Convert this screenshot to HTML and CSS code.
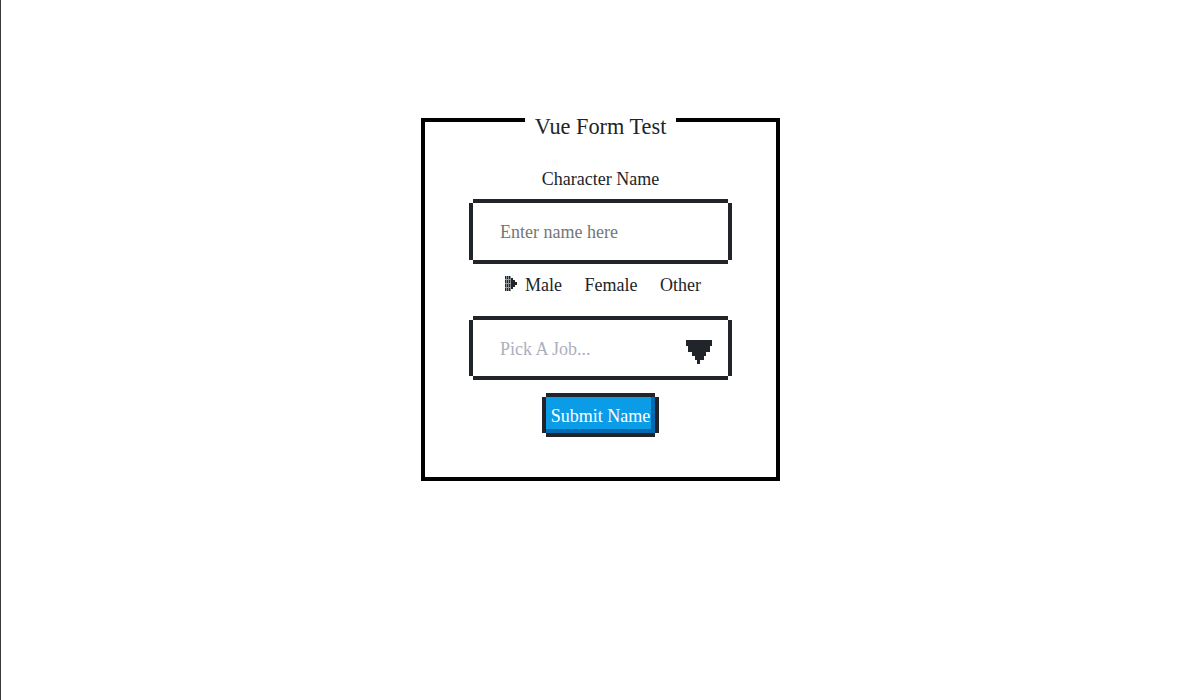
FILE: index.html
```html
<!DOCTYPE html>
<html lang="en">
<head>
<meta charset="utf-8">
<title>Vue Form Test</title>
<link rel="stylesheet" href="styles.css">
</head>
<body>
<div class="page">
  <form class="card">
    <h2 class="card-title">Vue Form Test</h2>
    <label class="field-label" for="name">Character Name</label>
    <div class="pixel-box input-box">
      <input id="name" class="text-input" type="text" placeholder="Enter name here">
    </div>
    <div class="radios">
      <label class="radio">
        <svg class="radio-icon" width="12" height="15" viewBox="0 0 12 15" aria-hidden="true">
          <rect x="0" y="0" width="6" height="15" fill="#212529"/>
          <rect x="1" y="0" width="1" height="15" fill="#8a8d90"/>
          <rect x="3" y="0" width="1" height="15" fill="#8a8d90"/>
          <rect x="5" y="0" width="1" height="15" fill="#8a8d90"/>
          <rect x="0" y="3" width="6" height="1" fill="#9a9da0"/>
          <rect x="0" y="7" width="6" height="1" fill="#9a9da0"/>
          <rect x="0" y="11" width="6" height="1" fill="#9a9da0"/>
          <rect x="6" y="2" width="2" height="11" fill="#212529"/>
          <rect x="8" y="4" width="2" height="7" fill="#212529"/>
          <rect x="10" y="6" width="2" height="3" fill="#212529"/>
        </svg>
        <span>Male</span>
      </label>
      <label class="radio"><span>Female</span></label>
      <label class="radio"><span>Other</span></label>
    </div>
    <div class="pixel-box select-box">
      <span class="select-placeholder">Pick A Job...</span>
      <svg class="select-arrow" width="26" height="24" viewBox="0 0 26 24" aria-hidden="true">
        <rect x="0" y="0" width="26" height="6" fill="#212529"/>
        <rect x="2" y="6" width="22" height="6" fill="#212529"/>
        <rect x="6" y="12" width="14" height="4" fill="#212529"/>
        <rect x="9" y="16" width="9" height="4" fill="#212529"/>
        <rect x="11" y="20" width="3" height="4" fill="#212529"/>
      </svg>
    </div>
    <button class="submit-btn" type="button">Submit Name</button>
  </form>
</div>
</body>
</html>
```

FILE: styles.css
```css
html, body {
  margin: 0;
  padding: 0;
  background: #fff;
}

body {
  font-family: "Liberation Serif", "Times New Roman", serif;
  color: #212529;
}

.page {
  min-height: 100vh;
  box-sizing: border-box;
  border-left: 1px solid #3a3a3a;
  padding-top: 118px;
}

.card {
  width: 351px;
  margin: 0 auto;
  border: 4px solid #000;
  display: flex;
  flex-direction: column;
  align-items: center;
  padding: 0 0 40px;
}

.card-title {
  margin: -7px auto 0;
  padding: 0 10px;
  background: #fff;
  font-size: 22.3px;
  line-height: 24px;
  font-weight: normal;
  color: #212529;
}

.field-label {
  margin-top: 29px;
  font-size: 18px;
  line-height: 22px;
}

.pixel-box {
  position: relative;
  width: 255px;
  box-sizing: border-box;
  border-top: 4px solid #212529;
  border-bottom: 4px solid #212529;
  background: #fff;
}

.pixel-box::before {
  content: "";
  position: absolute;
  top: 0;
  bottom: 0;
  left: -4px;
  right: -4px;
  border-left: 4px solid #212529;
  border-right: 4px solid #212529;
  pointer-events: none;
}

.input-box {
  margin-top: 9px;
  height: 65px;
}

.text-input {
  display: block;
  width: 100%;
  height: 100%;
  box-sizing: border-box;
  border: 0;
  outline: none;
  padding: 2px 27px 0;
  background: transparent;
  font-family: inherit;
  font-size: 18px;
  color: #212529;
}

.text-input::placeholder {
  color: #767676;
  opacity: 1;
}

.radios {
  margin-top: 10px;
  display: flex;
  align-items: center;
  gap: 22.5px;
  padding-left: 5px;
  font-size: 18px;
  line-height: 22px;
}

.radio {
  display: flex;
  align-items: center;
  gap: 8px;
}

.radio-icon {
  display: block;
  margin-top: -3px;
}

.select-box {
  margin-top: 20px;
  height: 64px;
  display: flex;
  align-items: center;
  justify-content: space-between;
  padding: 0 16px 0 27px;
}

.select-placeholder {
  font-size: 18px;
  color: #adafbc;
  margin-top: 2px;
}

.select-arrow {
  display: block;
  margin-top: 8px;
}

.submit-btn {
  position: relative;
  margin-top: 13px;
  height: 44px;
  padding: 2px 5px 0;
  border: 0;
  border-top: 4px solid #212529;
  border-bottom: 4px solid #212529;
  background: #0b9ce8;
  box-shadow: inset -4px -4px 0 #006bb3;
  color: #fff;
  font-family: inherit;
  font-size: 18px;
  line-height: 34px;
  cursor: pointer;
}

.submit-btn::before {
  content: "";
  position: absolute;
  top: 0;
  bottom: 0;
  left: -4px;
  right: -4px;
  border-left: 4px solid #212529;
  border-right: 4px solid #212529;
  pointer-events: none;
}
```
